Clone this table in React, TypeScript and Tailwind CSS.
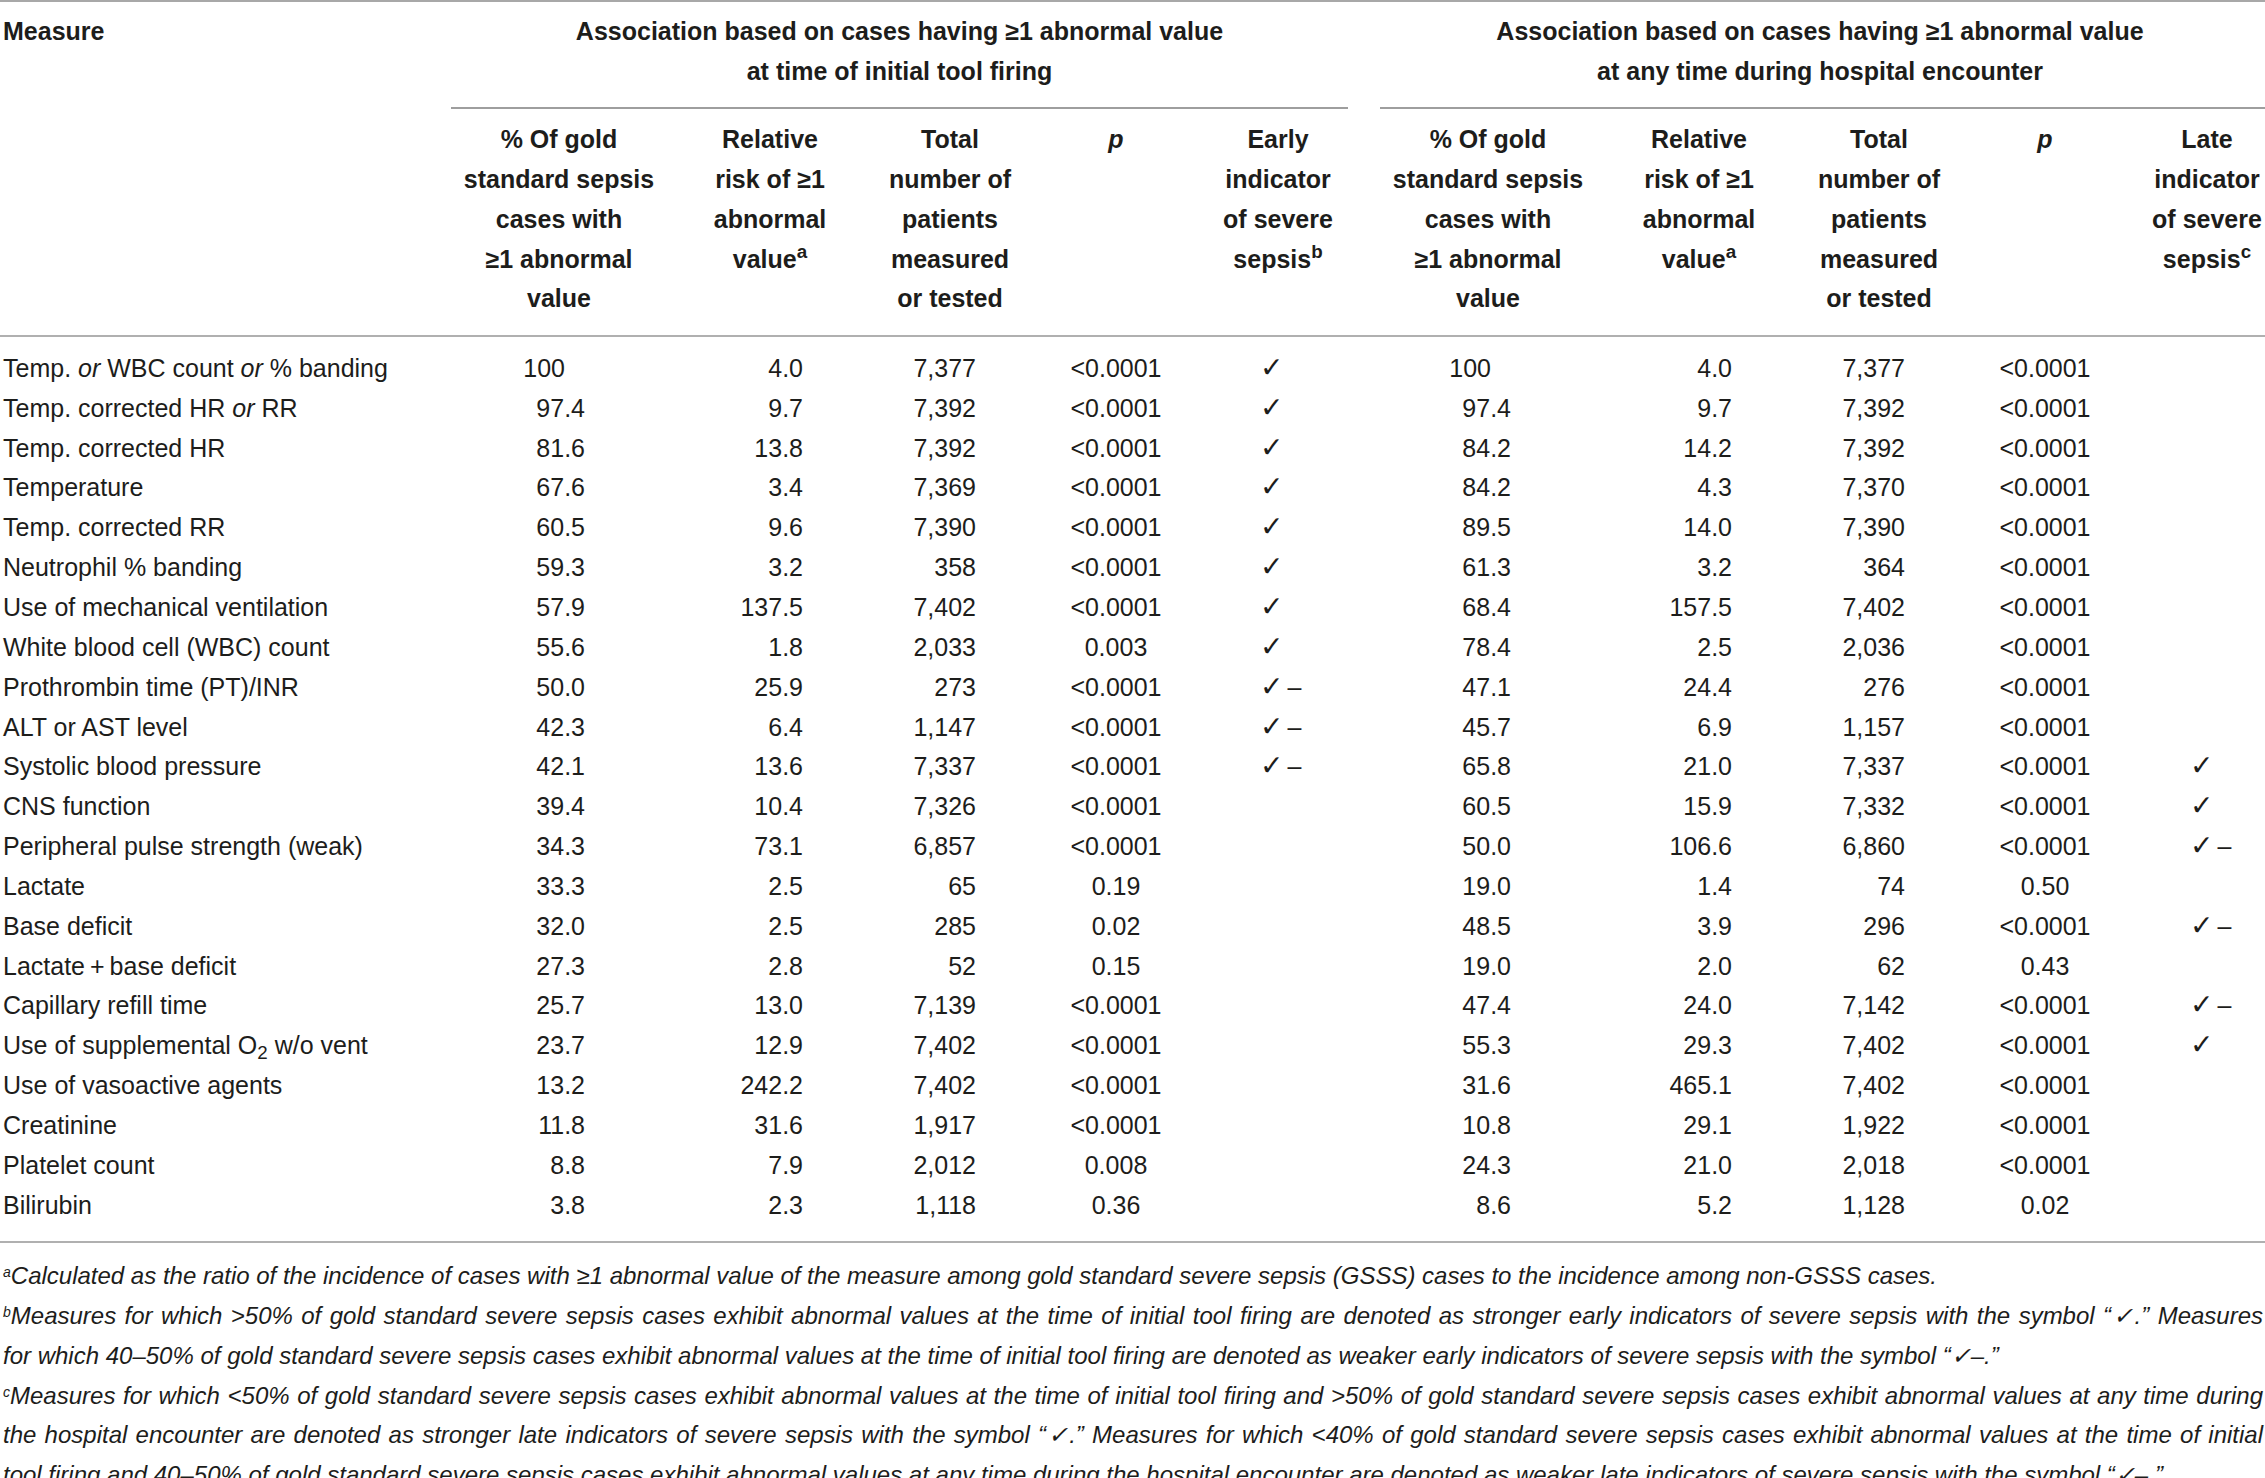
import React from 'react';

const cols =
  'grid grid-cols-[451px_216px_206px_154px_178px_146px_29px_216px_206px_154px_178px_146px]';

type Side = [string, string, string, string, string];

interface Row {
  label: React.ReactNode;
  left: Side;
  right: Side;
}

const C = 'c';
const CD = 'cd';

const rows: Row[] = [
  {
    label: (
      <>
        Temp. <i>or</i> WBC count <i>or</i> % banding
      </>
    ),
    left: ['100', '4.0', '7,377', '<0.0001', C],
    right: ['100', '4.0', '7,377', '<0.0001', ''],
  },
  {
    label: (
      <>
        Temp. corrected HR <i>or</i> RR
      </>
    ),
    left: ['97.4', '9.7', '7,392', '<0.0001', C],
    right: ['97.4', '9.7', '7,392', '<0.0001', ''],
  },
  { label: 'Temp. corrected HR', left: ['81.6', '13.8', '7,392', '<0.0001', C], right: ['84.2', '14.2', '7,392', '<0.0001', ''] },
  { label: 'Temperature', left: ['67.6', '3.4', '7,369', '<0.0001', C], right: ['84.2', '4.3', '7,370', '<0.0001', ''] },
  { label: 'Temp. corrected RR', left: ['60.5', '9.6', '7,390', '<0.0001', C], right: ['89.5', '14.0', '7,390', '<0.0001', ''] },
  { label: 'Neutrophil % banding', left: ['59.3', '3.2', '358', '<0.0001', C], right: ['61.3', '3.2', '364', '<0.0001', ''] },
  { label: 'Use of mechanical ventilation', left: ['57.9', '137.5', '7,402', '<0.0001', C], right: ['68.4', '157.5', '7,402', '<0.0001', ''] },
  { label: 'White blood cell (WBC) count', left: ['55.6', '1.8', '2,033', '0.003', C], right: ['78.4', '2.5', '2,036', '<0.0001', ''] },
  { label: 'Prothrombin time (PT)/INR', left: ['50.0', '25.9', '273', '<0.0001', CD], right: ['47.1', '24.4', '276', '<0.0001', ''] },
  { label: 'ALT or AST level', left: ['42.3', '6.4', '1,147', '<0.0001', CD], right: ['45.7', '6.9', '1,157', '<0.0001', ''] },
  { label: 'Systolic blood pressure', left: ['42.1', '13.6', '7,337', '<0.0001', CD], right: ['65.8', '21.0', '7,337', '<0.0001', C] },
  { label: 'CNS function', left: ['39.4', '10.4', '7,326', '<0.0001', ''], right: ['60.5', '15.9', '7,332', '<0.0001', C] },
  { label: 'Peripheral pulse strength (weak)', left: ['34.3', '73.1', '6,857', '<0.0001', ''], right: ['50.0', '106.6', '6,860', '<0.0001', CD] },
  { label: 'Lactate', left: ['33.3', '2.5', '65', '0.19', ''], right: ['19.0', '1.4', '74', '0.50', ''] },
  { label: 'Base deficit', left: ['32.0', '2.5', '285', '0.02', ''], right: ['48.5', '3.9', '296', '<0.0001', CD] },
  { label: 'Lactate\u2009+\u2009base deficit', left: ['27.3', '2.8', '52', '0.15', ''], right: ['19.0', '2.0', '62', '0.43', ''] },
  { label: 'Capillary refill time', left: ['25.7', '13.0', '7,139', '<0.0001', ''], right: ['47.4', '24.0', '7,142', '<0.0001', CD] },
  {
    label: (
      <>
        Use of supplemental O<sub>2</sub> w/o vent
      </>
    ),
    left: ['23.7', '12.9', '7,402', '<0.0001', ''],
    right: ['55.3', '29.3', '7,402', '<0.0001', C],
  },
  { label: 'Use of vasoactive agents', left: ['13.2', '242.2', '7,402', '<0.0001', ''], right: ['31.6', '465.1', '7,402', '<0.0001', ''] },
  { label: 'Creatinine', left: ['11.8', '31.6', '1,917', '<0.0001', ''], right: ['10.8', '29.1', '1,922', '<0.0001', ''] },
  { label: 'Platelet count', left: ['8.8', '7.9', '2,012', '0.008', ''], right: ['24.3', '21.0', '2,018', '<0.0001', ''] },
  { label: 'Bilirubin', left: ['3.8', '2.3', '1,118', '0.36', ''], right: ['8.6', '5.2', '1,128', '0.02', ''] },
];

// check mark, optionally followed by a dash (weaker indicator)
const Mark = ({ kind }: { kind: string }) => {
  if (!kind) return null;
  return (
    <span className="whitespace-nowrap">
      <span className="text-[28px] font-['DejaVu_Sans',sans-serif] leading-none">{'\u2713'}</span>
      {kind === 'cd' && <span className="ml-[4px]">{'\u2013'}</span>}
    </span>
  );
};

const SubHead = ({ lines }: { lines: React.ReactNode[] }) => (
  <div className="flex flex-col items-center whitespace-nowrap">
    {lines.map((l, i) => (
      <span key={i}>{l}</span>
    ))}
  </div>
);

const pctLines = ['% Of gold', 'standard sepsis', 'cases with', '\u22651 abnormal', 'value'];
const rrLines = [
  'Relative',
  'risk of \u22651',
  'abnormal',
  <>
    value<sup>a</sup>
  </>,
];
const totLines = ['Total', 'number of', 'patients', 'measured', 'or tested'];

const SideCells = ({ v, late }: { v: Side; late?: boolean }) => (
  <>
    <div className={`text-right ${v[0] === '100' ? (late ? 'pr-[105px]' : 'pr-[102px]') : late ? 'pr-[85px]' : 'pr-[82px]'}`}>
      {v[0]}
    </div>
    <div className="text-right pr-[70px]">{v[1]}</div>
    <div className="text-right pr-[51px]">{v[2]}</div>
    <div className="text-center">{v[3]}</div>
    <div className={late ? 'pl-[56px]' : 'pl-[55px]'}>
      <Mark kind={v[4]} />
    </div>
  </>
);

export default function App() {
  return (
    <div className="w-[2265px] overflow-hidden bg-white text-[#1d1d1b] font-['Liberation_Sans',Arial,sans-serif] text-[25px] leading-[39.7px]">
      <div className="border-t-2 border-[#a8a8a8]">
        {/* header */}
        <div className={`${cols} border-b-2 border-[#b0b0b0] font-bold`}>
          <div className="col-start-1 row-span-2 row-start-1 pt-[10px] pl-[3px]">Measure</div>
          <div className="col-start-2 col-span-5 row-start-1 pt-[10px] pb-[16px] border-b-2 border-[#9e9e9e] mr-[3px] flex flex-col items-center whitespace-nowrap">
            <span>Association based on cases having {'\u2265'}1 abnormal value</span>
            <span>at time of initial tool firing</span>
          </div>
          <div className="col-start-8 col-span-5 row-start-1 pt-[10px] pb-[16px] border-b-2 border-[#9e9e9e] flex flex-col items-center whitespace-nowrap">
            <span className="-translate-x-[10px]">Association based on cases having {'\u2265'}1 abnormal value</span>
            <span className="-translate-x-[10px]">at any time during hospital encounter</span>
          </div>

          <div className="col-start-2 row-start-2 pt-[11px] pb-[16px]">
            <SubHead lines={pctLines} />
          </div>
          <div className="col-start-3 row-start-2 pt-[11px]">
            <SubHead lines={rrLines} />
          </div>
          <div className="col-start-4 row-start-2 pt-[11px]">
            <SubHead lines={totLines} />
          </div>
          <div className="col-start-5 row-start-2 pt-[11px] text-center italic">p</div>
          <div className="col-start-6 row-start-2 pt-[11px]">
            <SubHead
              lines={[
                'Early',
                'indicator',
                'of severe',
                <>
                  sepsis<sup>b</sup>
                </>,
              ]}
            />
          </div>

          <div className="col-start-8 row-start-2 pt-[11px]">
            <SubHead lines={pctLines} />
          </div>
          <div className="col-start-9 row-start-2 pt-[11px]">
            <SubHead lines={rrLines} />
          </div>
          <div className="col-start-10 row-start-2 pt-[11px]">
            <SubHead lines={totLines} />
          </div>
          <div className="col-start-11 row-start-2 pt-[11px] text-center italic">p</div>
          <div className="col-start-12 row-start-2 pt-[11px]">
            <SubHead
              lines={[
                'Late',
                'indicator',
                'of severe',
                <>
                  sepsis<sup>c</sup>
                </>,
              ]}
            />
          </div>
        </div>

        {/* body */}
        <div className="pt-[12px] pb-[16px] border-b-2 border-[#b0b0b0] leading-[39.85px]">
          {rows.map((r, i) => (
            <div key={i} className={`${cols} h-[39.85px]`}>
              <div className="pl-[3px] whitespace-nowrap">{r.label}</div>
              <SideCells v={r.left} />
              <div />
              <SideCells v={r.right} late />
            </div>
          ))}
        </div>

        {/* footnotes */}
        <div className="pt-[13px] pl-[3px] pr-[2px] italic text-[24px] leading-[39.7px]">
          <p>
            <sup className="text-[14px]">a</sup>Calculated as the ratio of the incidence of cases with {'\u2265'}1 abnormal value of
            the measure among gold standard severe sepsis (GSSS) cases to the incidence among non-GSSS cases.
          </p>
          <p className="text-justify [text-align-last:justify]">
            <sup className="text-[14px]">b</sup>Measures for which {'>'}50% of gold standard severe sepsis cases exhibit abnormal
            values at the time of initial tool firing are denoted as stronger early indicators of severe sepsis with the
            symbol “{'\u2713'}.” Measures
          </p>
          <p>
            for which 40–50% of gold standard severe sepsis cases exhibit abnormal values at the time of initial tool firing
            are denoted as weaker early indicators of severe sepsis with the symbol “{'\u2713'}–.”
          </p>
          <p className="text-justify [text-align-last:justify]">
            <sup className="text-[14px]">c</sup>Measures for which {'<'}50% of gold standard severe sepsis cases exhibit abnormal
            values at the time of initial tool firing and {'>'}50% of gold standard severe sepsis cases exhibit abnormal
            values at any time during
          </p>
          <p className="text-justify [text-align-last:justify]">
            the hospital encounter are denoted as stronger late indicators of severe sepsis with the symbol “{'\u2713'}.”
            Measures for which {'<'}40% of gold standard severe sepsis cases exhibit abnormal values at the time of initial
          </p>
          <p>
            tool firing and 40–50% of gold standard severe sepsis cases exhibit abnormal values at any time during the
            hospital encounter are denoted as weaker late indicators of severe sepsis with the symbol “{'\u2713'}–.”
          </p>
        </div>
      </div>
    </div>
  );
}
